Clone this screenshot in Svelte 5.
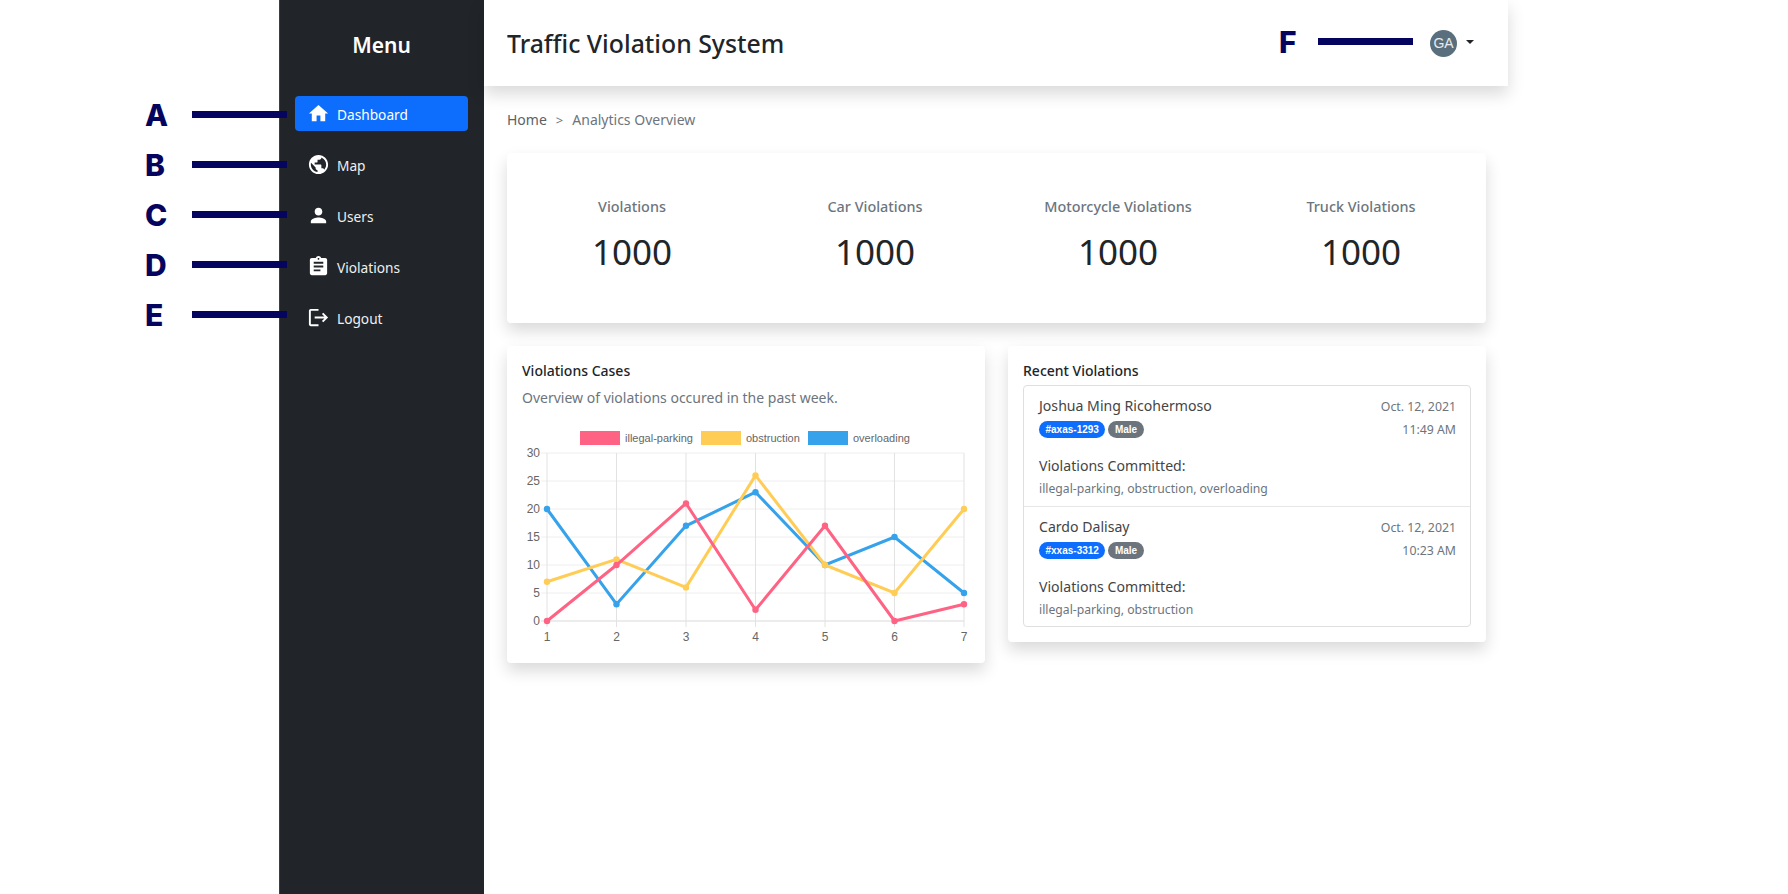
<script>
const navItems = [
  { label: 'Dashboard', active: true, d: 'M10 20v-6h4v6h5v-8h3L12 3 2 12h3v8z' },
  { label: 'Map', d: 'M12 2C6.48 2 2 6.48 2 12s4.48 10 10 10 10-4.48 10-10S17.52 2 12 2zm-1 17.93c-3.95-.49-7-3.85-7-7.93 0-.62.08-1.21.21-1.79L9 15v1c0 1.1.9 2 2 2v1.93zm6.9-2.54c-.26-.81-1-1.39-1.9-1.39h-1v-3c0-.55-.45-1-1-1H8v-2h2c.55 0 1-.45 1-1V7h2c1.1 0 2-.9 2-2v-.41c2.93 1.19 5 4.06 5 7.41 0 2.08-.8 3.97-2.1 5.39z' },
  { label: 'Users', d: 'M12 12c2.21 0 4-1.79 4-4s-1.79-4-4-4-4 1.79-4 4 1.79 4 4 4zm0 2c-2.67 0-8 1.34-8 4v2h16v-2c0-2.66-5.33-4-8-4z' },
  { label: 'Violations', d: 'M19 3h-4.18C14.4 1.84 13.3 1 12 1c-1.3 0-2.4.84-2.82 2H5c-1.1 0-2 .9-2 2v14c0 1.1.9 2 2 2h14c1.1 0 2-.9 2-2V5c0-1.1-.9-2-2-2zm-7 0c.55 0 1 .45 1 1s-.45 1-1 1-1-.45-1-1 .45-1 1-1zm2 14H7v-2h7v2zm3-4H7v-2h10v2zm0-4H7V7h10v2z' },
  { label: 'Logout', d: 'M17 7l-1.41 1.41L18.17 11H8v2h10.17l-2.58 2.58L17 17l5-5zM4 5h8V3H4c-1.1 0-2 .9-2 2v14c0 1.1.9 2 2 2h8v-2H4V5z' }
];
const stats = ['Violations', 'Car Violations', 'Motorcycle Violations', 'Truck Violations'];
const recent = [
  { name: 'Joshua Ming Ricohermoso', plate: '#axas-1293', time: '11:49 AM', list: 'illegal-parking, obstruction, overloading' },
  { name: 'Cardo Dalisay', plate: '#xxas-3312', time: '10:23 AM', list: 'illegal-parking, obstruction' }
];

// chart geometry, local to the svg
const x0 = 25, xStep = 69.5, y0 = 196, yUnit = 5.6, top = y0 - 30 * yUnit;
const labels = [1, 2, 3, 4, 5, 6, 7];
const ticks = [0, 5, 10, 15, 20, 25, 30];
const series = [
  { color: '#36a2eb', data: [20, 3, 17, 23, 10, 15, 5] },
  { color: '#ffcd56', data: [7, 11, 6, 26, 10, 5, 20] },
  { color: '#ff6384', data: [0, 10, 21, 2, 17, 0, 3] }
];
const legend = [
  { color: '#ff6384', label: 'illegal-parking', x: 58 },
  { color: '#ffcd56', label: 'obstruction', x: 179 },
  { color: '#36a2eb', label: 'overloading', x: 286 }
];
const px = (i) => x0 + i * xStep;
const py = (v) => y0 - v * yUnit;
const line = (data) => data.map((v, i) => `${px(i)},${py(v)}`).join(' ');
</script>

<div class="page">
  <aside class="sidebar">
    <h2>Menu</h2>
    <nav>
      {#each navItems as item}
        <a href="#top" class="nav-link" class:active={item.active}>
          <svg viewBox="0 0 24 24" width="23" height="23"><path d={item.d} fill="#fff" /></svg>
          <span>{item.label}</span>
        </a>
      {/each}
    </nav>
  </aside>

  <div class="content">
    <header class="topbar">
      <h1>Traffic Violation System</h1>
      <div class="user">
        <span class="avatar">GA</span>
        <span class="caret"></span>
      </div>
    </header>

    <main>
      <div class="crumbs">
        <span class="home">Home</span>
        <span class="sep">&gt;</span>
        <span>Analytics Overview</span>
      </div>

      <section class="card stats">
        {#each stats as s}
          <div class="stat">
            <div class="stat-label">{s}</div>
            <div class="stat-value">1000</div>
          </div>
        {/each}
      </section>

      <div class="row">
        <section class="card panel">
          <h3>Violations Cases</h3>
          <p class="sub">Overview of violations occured in the past week.</p>
          <svg class="chart" width="448" height="223" viewBox="0 0 448 223">
            {#each ticks as t}
              <line x1={x0 - 6} x2={px(6)} y1={py(t)} y2={py(t)} stroke={t === 0 ? '#d9d9d9' : '#eeeeee'} />
              <text x={x0 - 7} y={py(t) + 4} text-anchor="end">{t}</text>
            {/each}
            {#each labels as l, i}
              <line x1={px(i)} x2={px(i)} y1={top} y2={y0 + 6} stroke="#e2e2e2" />
              <text x={px(i)} y={y0 + 20} text-anchor="middle">{l}</text>
            {/each}
            {#each legend as item}
              <rect x={item.x} y="6" width="40" height="14" fill={item.color} />
              <text class="legend-text" x={item.x + 45} y="17">{item.label}</text>
            {/each}
            {#each series as s}
              <polyline points={line(s.data)} fill="none" stroke={s.color} stroke-width="3" />
              {#each s.data as v, i}
                <circle cx={px(i)} cy={py(v)} r="3.2" fill={s.color} />
              {/each}
            {/each}
          </svg>
        </section>

        <section class="card panel recent">
          <h3>Recent Violations</h3>
          <ul>
            {#each recent as r}
              <li>
                <div class="entry-top">
                  <div>
                    <div class="name">{r.name}</div>
                    <div class="badges">
                      <span class="badge blue">{r.plate}</span>
                      <span class="badge gray">Male</span>
                    </div>
                  </div>
                  <div class="when">
                    <div>Oct. 12, 2021</div>
                    <div>{r.time}</div>
                  </div>
                </div>
                <div class="committed">Violations Committed:</div>
                <div class="list">{r.list}</div>
              </li>
            {/each}
          </ul>
        </section>
      </div>
    </main>
  </div>

  <!-- callouts laid over the screenshot -->
  <div class="callouts">
    {#each ['A', 'B', 'C', 'D', 'E'] as c}
      <div class="callout"><b>{c}</b><i></i></div>
    {/each}
  </div>
  <div class="callout callout-f"><b>F</b><i></i></div>
</div>

<style>
:global(body) {
  margin: 0;
  background: #fff;
}
.page {
  position: relative;
  display: flex;
  width: 1788px;
  height: 894px;
  padding-left: 279px;
  box-sizing: border-box;
  overflow: hidden;
  font-family: "Noto Sans", "Open Sans", sans-serif;
  color: #212529;
}
.sidebar {
  width: 205px;
  flex: none;
  background: #212529;
  border-left: 1px solid #3a3f44;
  box-sizing: border-box;
  padding: 0 16px 0 15px;
}
.sidebar h2 {
  margin: 0;
  height: 92px;
  line-height: 90px;
  text-align: center;
  color: #fff;
  font-size: 21px;
  font-weight: 600;
}
nav {
  display: flex;
  flex-direction: column;
  gap: 16px;
  margin-top: 4px;
}
.nav-link {
  display: flex;
  align-items: center;
  gap: 7px;
  height: 35px;
  padding-left: 12px;
  border-radius: 4px;
  color: #eef0f2;
  font-size: 13.7px;
  text-decoration: none;
}
.nav-link span {
  padding-top: 2px;
}
.nav-link.active {
  background: #0d6efd;
  color: #fff;
}
.content {
  width: 1024px;
  flex: none;
}
.topbar {
  height: 86px;
  display: flex;
  align-items: center;
  justify-content: space-between;
  padding: 0 34px 0 23px;
  box-sizing: border-box;
  background: #fff;
  box-shadow: 0 8px 16px rgba(0, 0, 0, 0.15);
}
h1 {
  margin: 0;
  font-size: 24.8px;
  font-weight: 500;
}
.user {
  display: flex;
  align-items: flex-start;
  gap: 9px;
}
.avatar {
  width: 27px;
  height: 27px;
  border-radius: 50%;
  background: #5a6f7d;
  color: #e8ecef;
  font-family: "Liberation Sans", sans-serif;
  font-size: 14px;
  line-height: 27px;
  text-align: center;
}
.caret {
  margin-top: 10px;
  border-top: 4.5px solid #212529;
  border-left: 4.5px solid transparent;
  border-right: 4.5px solid transparent;
}
main {
  padding: 0 22px 0 23px;
}
.crumbs {
  height: 67px;
  display: flex;
  align-items: center;
  gap: 9px;
  font-size: 14px;
  color: #6c757d;
}
.crumbs .home {
  color: #5a6168;
}
.crumbs .sep {
  font-size: 13px;
}
.card {
  background: #fff;
  border-radius: 4px;
  box-shadow: 0 8px 16px rgba(0, 0, 0, 0.15);
}
.stats {
  height: 170px;
  padding-bottom: 5px;
  box-sizing: border-box;
  display: grid;
  grid-template-columns: repeat(4, 243px);
  justify-content: center;
  align-items: center;
  text-align: center;
}
.stat-label {
  font-size: 14.4px;
  font-weight: 500;
  color: #6c757d;
}
.stat-value {
  font-size: 35px;
  line-height: 46px;
  margin-top: 13px;
}
.row {
  display: flex;
  align-items: flex-start;
  gap: 23px;
  margin-top: 23px;
}
.panel {
  width: 478px;
  padding: 16px 15px 15px;
  box-sizing: border-box;
}
h3 {
  margin: 0;
  font-size: 14px;
  font-weight: 500;
  line-height: 18px;
}
.sub {
  margin: 9px 0 0;
  font-size: 14px;
  line-height: 18px;
  color: #6c757d;
}
.chart {
  display: block;
  margin-top: 18px;
}
.chart text {
  font-family: "Liberation Sans", sans-serif;
  font-size: 12px;
  fill: #666;
}
.chart .legend-text {
  font-size: 11px;
}
ul {
  list-style: none;
  margin: 5px 0 0;
  padding: 0;
  border: 1px solid #dfdfdf;
  border-radius: 4px;
}
li {
  height: 120px;
  padding: 10px 14px 0 15px;
  box-sizing: border-box;
}
li + li {
  border-top: 1px solid #e6e6e6;
}
.entry-top {
  display: flex;
  justify-content: space-between;
}
.name {
  font-size: 14.1px;
  line-height: 20px;
  color: #444;
}
.badges {
  display: flex;
  gap: 3px;
  margin-top: 5px;
}
.badge {
  height: 17px;
  padding: 0 6.5px;
  border-radius: 9px;
  color: #fff;
  font-family: "Liberation Sans", sans-serif;
  font-size: 10px;
  font-weight: 700;
  line-height: 17px;
}
.blue {
  background: #0d6efd;
}
.gray {
  background: #6c757d;
}
.when {
  margin-top: -1px;
  text-align: right;
  font-size: 12.3px;
  line-height: 23px;
  color: #6c757d;
}
.committed {
  margin-top: 15px;
  font-size: 14.1px;
  line-height: 20px;
  color: #444;
}
.list {
  margin-top: 4px;
  font-size: 12.2px;
  line-height: 18px;
  color: #6c757d;
}
.callouts {
  position: absolute;
  left: 145px;
  top: 99px;
  display: flex;
  flex-direction: column;
  gap: 19px;
}
.callout {
  display: flex;
  align-items: center;
  height: 31px;
  font-family: "Inter", sans-serif;
  color: #05055f;
}
.callout b {
  width: 47px;
  font-size: 30px;
  font-weight: 800;
  text-align: left;
}
.callout i {
  width: 95px;
  height: 7px;
  background: #05055f;
}
.callout-f {
  position: absolute;
  left: 1279px;
  top: 26px;
}
.callout-f b {
  width: 39px;
}
</style>
